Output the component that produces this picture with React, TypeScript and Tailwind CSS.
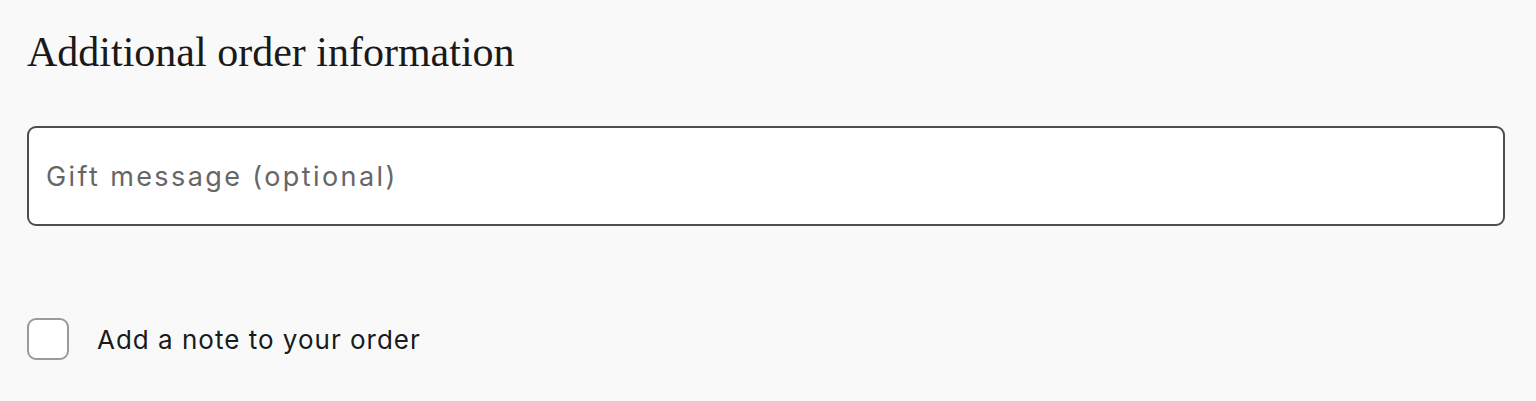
export default function App() {
  return (
    <div className="min-h-[401px] w-full bg-[#f9f9f9] px-[27px] pt-[28px]">
      <h2
        className="text-[42px] leading-[48px] text-[#1a1a1a]"
        style={{ fontFamily: '"Liberation Serif", "Times New Roman", serif' }}
      >
        Additional order information
      </h2>
      <div className="mt-[50px] flex h-[100px] w-[1478px] items-center rounded-[9px] border-2 border-[#4d4d4d] bg-white pl-[17px] pr-[17px] pt-[3px]">
        <input
          type="text"
          placeholder="Gift message (optional)"
          className="w-full bg-transparent text-[27px] tracking-[2.4px] text-[#1a1a1a] outline-none placeholder:text-[#666666]"
          style={{ fontFamily: 'Inter, "Noto Sans", sans-serif' }}
        />
      </div>
      <label className="mt-[92px] flex items-center gap-[28px]">
        <span className="h-[42px] w-[42px] rounded-[9px] border-2 border-[#9a9a9a] bg-white" />
        <span
          className="text-[26px] tracking-[1px] text-[#1a1a1a]"
          style={{ fontFamily: 'Inter, "Noto Sans", sans-serif' }}
        >
          Add a note to your order
        </span>
      </label>
    </div>
  );
}
